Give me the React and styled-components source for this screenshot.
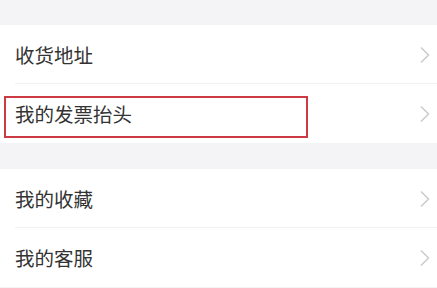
import React from "react";
import styled, { createGlobalStyle } from "styled-components";

const Global = createGlobalStyle`
  html, body { margin: 0; padding: 0; background: #f4f4f6; }
  body { font-family: "Noto Sans CJK SC", "Noto Sans", sans-serif; }
`;

const Page = styled.div`
  width: 437px;
  height: 288px;
  overflow: hidden;
  background: #f4f4f6;
  padding-top: 25px;
  box-sizing: border-box;
  display: flex;
  flex-direction: column;
  gap: 26px;
`;

const Group = styled.div`
  background: #fff;
  display: flex;
  flex-direction: column;
`;

const Row = styled.div`
  position: relative;
  height: 59px;
  display: flex;
  align-items: center;
  justify-content: space-between;
  padding: 0 6px 0 15px;
  box-sizing: border-box;
  ${(p) =>
    p.$divider &&
    `
    &::after {
      content: "";
      position: absolute;
      left: 15px;
      right: 0;
      bottom: 0;
      height: 1px;
      background: #f1f1f3;
    }
  `}
`;

const Label = styled.span`
  font-size: 19.5px;
  color: #333;
`;

const Highlight = styled.div`
  position: absolute;
  left: 4px;
  top: 12px;
  width: 304px;
  height: 42px;
  border: 2px solid #cc3b44;
  box-sizing: border-box;
  pointer-events: none;
`;

const Chevron = () => (
  <svg width="12" height="18" viewBox="0 0 12 18" style={{ display: "block" }}>
    <path d="M2 1.5 L9.5 9 L2 16.5" fill="none" stroke="#c9c9cd" strokeWidth="1.4" />
  </svg>
);

const Item = ({ label, divider, highlight }) => (
  <Row $divider={divider}>
    <Label>{label}</Label>
    <Chevron />
    {highlight && <Highlight />}
  </Row>
);

export default function App() {
  return (
    <>
      <Global />
      <Page>
        <Group>
          <Item label="收货地址" divider />
          <Item label="我的发票抬头" highlight />
        </Group>
        <Group>
          <Item label="我的收藏" divider />
          <Item label="我的客服" />
        </Group>
      </Page>
    </>
  );
}
